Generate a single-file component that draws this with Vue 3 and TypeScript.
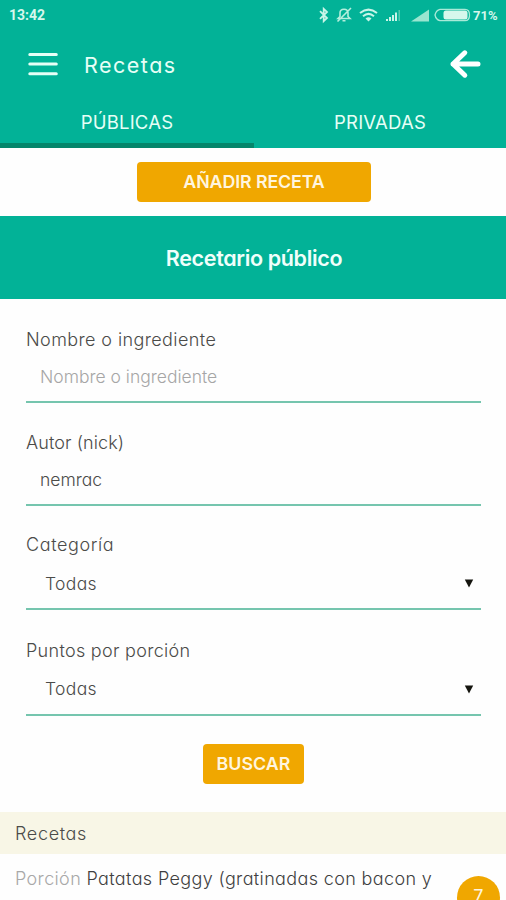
<script setup lang="ts">
import { ref } from 'vue'

interface Recipe {
  name: string
  points: number
}

const tabs = ['PÚBLICAS', 'PRIVADAS']
const activeTab = ref(0)
const query = ref('')
const author = ref('nemrac')
const selects = [
  { label: 'Categoría', value: 'Todas', kind: 'l-category' },
  { label: 'Puntos por porción', value: 'Todas', kind: 'l-points' },
]
const recipes: Recipe[] = [{ name: 'Patatas Peggy (gratinadas con bacon y', points: 7 }]
</script>

<template>
  <div class="screen">
    <header class="top">
      <div class="status">
        <span class="time">13:42</span>
        <svg class="status-icons" width="154" height="20" viewBox="0 0 154 20">
          <path d="M3 6.200 10 13 6.700 16.200V3.800L10 7 3 13.800" fill="none" stroke="#c9f5e8" stroke-width="1.800" />
          <g fill="none" stroke="#b5eedd" stroke-width="1.600">
            <path d="M21 13.500h12l-2-2V8c0-5-8-5-8 0v3.500zM25.500 15.800h3M20.500 16.500 34 3" />
          </g>
          <g fill="none" stroke="#c9f5e8" stroke-width="2">
            <path d="M43 8Q51.500 1.200 60 8M46 11.200Q51.500 6.500 57 11.200" />
            <path d="m51.500 16.500-3-3q3-2.400 6 0z" fill="#c9f5e8" stroke="none" />
          </g>
          <path d="M69 16v-2h2v2zM72 16v-4h2v4zM75 16v-6h2v6zM78 16V7.500h2V16z" fill="#c9f5e8" />
          <path d="M81.500 16V5h1.500v11z" fill="#54cbb0" />
          <path d="m94 16.500 18-12v12z" fill="#9ae5d0" />
          <path d="M123 4.300h25q4.500 0 4.500 5.700t-4.500 5.700h-25q-4-1-5-5.700 1-4.700 5-5.700z" fill="none" stroke="#a9ead8" stroke-width="1.300" />
          <rect x="126.500" y="5.500" width="24" height="9" rx="2.500" fill="#d5f7ec" />
        </svg>
        <span class="percent">71%</span>
      </div>
      <div class="bar">
        <svg class="menu" width="30" height="24" viewBox="0 0 30 24">
          <path d="M1.800 2.500h26.500M1.800 12h26.500M1.800 21.700h26.500" stroke="#e6fff6" stroke-width="3" stroke-linecap="round" />
        </svg>
        <h1>Recetas</h1>
        <svg class="back" width="32" height="30" viewBox="0 0 32 30">
          <path d="M15.800 3.800 4 15l11.800 11.200M4 15h25" fill="none" stroke="#fff" stroke-width="5" stroke-linecap="round" stroke-linejoin="round" />
        </svg>
      </div>
      <nav class="tabs">
        <button v-for="(tab, i) in tabs" :key="tab" class="tab" :class="{ active: i === activeTab }" @click="activeTab = i">
          <span>{{ tab }}</span>
        </button>
      </nav>
    </header>

    <div class="add"><button class="cta wide"><span>AÑADIR RECETA</span></button></div>
    <div class="banner"><h2>Recetario público</h2></div>

    <form class="filters" @submit.prevent>
      <div class="field">
        <label><span class="l-name">Nombre o ingrediente</span></label>
        <input v-model="query" class="control" placeholder="Nombre o ingrediente" />
      </div>
      <div class="field">
        <label><span class="l-author">Autor (nick)</span></label>
        <input v-model="author" class="control" />
      </div>
      <div v-for="s in selects" :key="s.kind" class="field select">
        <label><span :class="s.kind">{{ s.label }}</span></label>
        <div class="control">
          <span>{{ s.value }}</span>
          <svg width="10" height="10" viewBox="0 0 10 10"><path d="M.8 1.500h8.400L5 9.500z" fill="#15150f" /></svg>
        </div>
      </div>
      <div class="submit"><button class="cta search"><span>BUSCAR</span></button></div>
    </form>

    <h3 class="section">Recetas</h3>
    <ul class="recipes">
      <li v-for="r in recipes" :key="r.name">
        <p><span class="portion">Porción</span> <span class="name">{{ r.name }}</span></p>
        <span class="points">{{ r.points }}</span>
      </li>
    </ul>
  </div>
</template>

<style>
body {
  margin: 0;
  overflow: hidden;
}
</style>

<style scoped>
.screen {
  width: 506px;
  height: 900px;
  overflow: hidden;
  background: #fefefe;
  color: #4b4b49;
  font-family: Inter, 'Liberation Sans', sans-serif;
  font-feature-settings: 'cv11', 'ss03';
  font-size: 17.5px;
  font-weight: 300;
}
.screen * {
  box-sizing: border-box;
}
button,
input {
  font: inherit;
  font-feature-settings: inherit;
  border: 0;
  margin: 0;
  padding: 0;
  color: inherit;
  background: none;
}
h1, h2, h3, p, ul {
  margin: 0;
  padding: 0;
  font-weight: inherit;
}
.top {
  height: 148px;
  background: #02b297;
  color: #e6fff6;
}
.status {
  height: 30px;
  display: flex;
  align-items: center;
  padding: 0 8px 0 9px;
  color: #d5f7ec;
  font-family: Roboto, sans-serif;
  font-size: 14px;
  font-weight: 700;
}
.status-icons {
  margin-left: auto;
  margin-right: 2px;
}
.percent {
  width: 25px;
  font-size: 13px;
}
.bar {
  height: 68px;
  display: flex;
  align-items: center;
  padding: 0 25px 0 28px;
}
h1 {
  margin-left: 26px;
  padding-top: 1px;
  font-size: 21.5px;
  font-weight: 400;
  letter-spacing: 1.5px;
}
.back {
  margin-left: auto;
}
.tabs {
  height: 50px;
  display: grid;
  grid-template-columns: 254px 252px;
}
.tab {
  padding-top: 3px;
  border-bottom: 5px solid transparent;
  font-size: 18.5px;
  font-weight: 400;
  letter-spacing: 0.2px;
}
.tab.active {
  border-color: #04866b;
}
.add {
  height: 68px;
  padding: 14px 0 0 137px;
}
.cta {
  display: block;
  height: 40px;
  padding-bottom: 2px;
  border-radius: 4px;
  background: #f0a700;
  color: #fff5df;
  font-size: 17.8px;
  font-weight: 600;
}
.wide {
  width: 234px;
  letter-spacing: -0.1px;
}
.banner {
  height: 83px;
  display: flex;
  align-items: center;
  justify-content: center;
  padding-left: 2px;
  background: #02b297;
  color: #f0fffb;
}
h2 {
  font-size: 21.5px;
  font-weight: 600;
  letter-spacing: -0.35px;
}
.filters {
  height: 513px;
  padding: 26px 25px 0 26px;
}
.field {
  height: 102.5px;
}
.select {
  height: 105.5px;
}
label {
  display: block;
  height: 31px;
  font-size: 18px;
  line-height: 30px;
}
.l-name {
  letter-spacing: 0.4px;
}
.l-category {
  letter-spacing: 0.6px;
}
.l-points {
  letter-spacing: 0.3px;
}
.l-author {
  letter-spacing: 0.1px;
}
.control {
  display: block;
  width: 100%;
  height: 47px;
  padding: 0 0 4px 14px;
  border-bottom: 2px solid #75c5ae;
  outline: 0;
}
.control::placeholder {
  color: #a6a6a6;
  opacity: 1;
}
.select .control {
  display: flex;
  height: 49px;
  align-items: center;
  justify-content: space-between;
  padding: 0 7px 3px 19px;
  letter-spacing: 0.35px;
}
.submit {
  padding: 3px 0 0 177px;
}
.search {
  width: 101px;
  letter-spacing: 0.1px;
}
.section {
  height: 42px;
  padding-left: 15px;
  background: #f8f6e6;
  font-size: 18px;
  letter-spacing: 0.65px;
  line-height: 43px;
}
.recipes {
  list-style: none;
}
.recipes li {
  position: relative;
  height: 46px;
  padding-left: 15px;
  font-size: 18px;
  letter-spacing: 0.36px;
  line-height: 49px;
  white-space: nowrap;
}
.portion {
  color: #a8a8a8;
}
.name {
  color: #3f3f3f;
}
.points {
  position: absolute;
  top: 22px;
  left: 457px;
  width: 43px;
  height: 43px;
  border-radius: 50%;
  background: #f0a700;
  color: #fff5df;
  font-size: 18px;
  font-weight: 400;
  line-height: 41px;
  text-align: center;
}
</style>
